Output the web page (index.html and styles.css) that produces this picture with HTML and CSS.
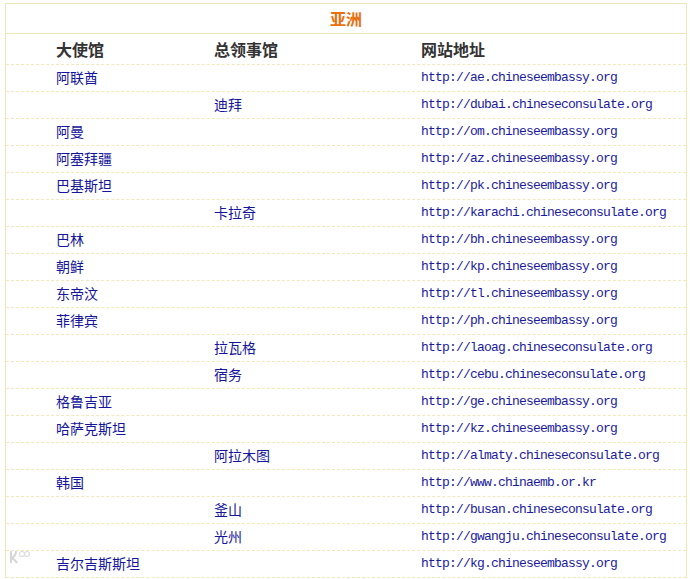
FILE: index.html
```html
<!DOCTYPE html>
<html lang="zh-CN">
<head>
<meta charset="utf-8">
<title>亚洲 - 使领馆网址</title>
<link rel="stylesheet" href="styles.css">
</head>
<body>
<div class="panel">
  <div class="title">亚洲</div>
  <div class="row head">
    <div>大使馆</div>
    <div>总领事馆</div>
    <div>网站地址</div>
  </div>
  <div class="row"><a>阿联酋</a><span></span><a class="url">http://ae.chineseembassy.org</a></div>
  <div class="row"><span></span><a>迪拜</a><a class="url">http://dubai.chineseconsulate.org</a></div>
  <div class="row"><a>阿曼</a><span></span><a class="url">http://om.chineseembassy.org</a></div>
  <div class="row"><a>阿塞拜疆</a><span></span><a class="url">http://az.chineseembassy.org</a></div>
  <div class="row"><a>巴基斯坦</a><span></span><a class="url">http://pk.chineseembassy.org</a></div>
  <div class="row"><span></span><a>卡拉奇</a><a class="url">http://karachi.chineseconsulate.org</a></div>
  <div class="row"><a>巴林</a><span></span><a class="url">http://bh.chineseembassy.org</a></div>
  <div class="row"><a>朝鲜</a><span></span><a class="url">http://kp.chineseembassy.org</a></div>
  <div class="row"><a>东帝汶</a><span></span><a class="url">http://tl.chineseembassy.org</a></div>
  <div class="row"><a>菲律宾</a><span></span><a class="url">http://ph.chineseembassy.org</a></div>
  <div class="row"><span></span><a>拉瓦格</a><a class="url">http://laoag.chineseconsulate.org</a></div>
  <div class="row"><span></span><a>宿务</a><a class="url">http://cebu.chineseconsulate.org</a></div>
  <div class="row"><a>格鲁吉亚</a><span></span><a class="url">http://ge.chineseembassy.org</a></div>
  <div class="row"><a>哈萨克斯坦</a><span></span><a class="url">http://kz.chineseembassy.org</a></div>
  <div class="row"><span></span><a>阿拉木图</a><a class="url">http://almaty.chineseconsulate.org</a></div>
  <div class="row"><a>韩国</a><span></span><a class="url">http://www.chinaemb.or.kr</a></div>
  <div class="row"><span></span><a>釜山</a><a class="url">http://busan.chineseconsulate.org</a></div>
  <div class="row"><span></span><a>光州</a><a class="url">http://gwangju.chineseconsulate.org</a></div>
  <div class="row"><a>吉尔吉斯斯坦</a><span></span><a class="url">http://kg.chineseembassy.org</a></div>
  <div class="watermark" aria-hidden="true">
    <svg width="22" height="16" viewBox="0 0 22 16"><path d="M3 2v12M3 9c3-1 5-4 5-7M3 9c3 1 5 3 6 5" fill="none" stroke="#cfcfcf" stroke-width="2"/><circle cx="14" cy="5" r="2.5" fill="none" stroke="#d6d6d6" stroke-width="1.2"/><circle cx="19" cy="5" r="2.5" fill="none" stroke="#d6d6d6" stroke-width="1.2"/></svg>
  </div>
</div>
</body>
</html>
```
FILE: styles.css
```css
html, body {
  margin: 0;
  padding: 0;
  background: #ffffff;
  overflow: hidden;
}
body {
  font-family: "Noto Sans CJK SC", "Noto Sans", sans-serif;
  font-size: 14px;
}
.panel {
  position: relative;
  margin: 3px 0 0 5px;
  width: 680px;
  border: 1px solid #efe5b5;
  border-bottom: none;
}
.title {
  height: 29px;
  line-height: 28px;
  text-align: center;
  color: #e8700e;
  font-size: 16px;
  font-weight: bold;
  border-bottom: 1px solid #efe5b5;
}
.row {
  display: grid;
  grid-template-columns: 158px 207px 1fr;
  padding-left: 50px;
  height: 26px;
  align-items: center;
  border-bottom: 1px dashed #f1e8bc;
}
.row.head {
  height: 30px;
  font-size: 16px;
  font-weight: bold;
  color: #333333;
  line-height: 28px;
}
.row a {
  color: #14149c;
  text-decoration: none;
  line-height: 24px;
  padding-bottom: 2px;
}
.row .url {
  color: #1a1aa0;
  font-family: "Liberation Mono", "DejaVu Sans Mono", monospace;
  font-size: 13px;
  letter-spacing: -0.8px;
  line-height: 26px;
  padding-bottom: 0;
}
.watermark {
  position: absolute;
  left: 2px;
  top: 545px;
  display: flex;
  align-items: center;
  opacity: 0.85;
}
```
